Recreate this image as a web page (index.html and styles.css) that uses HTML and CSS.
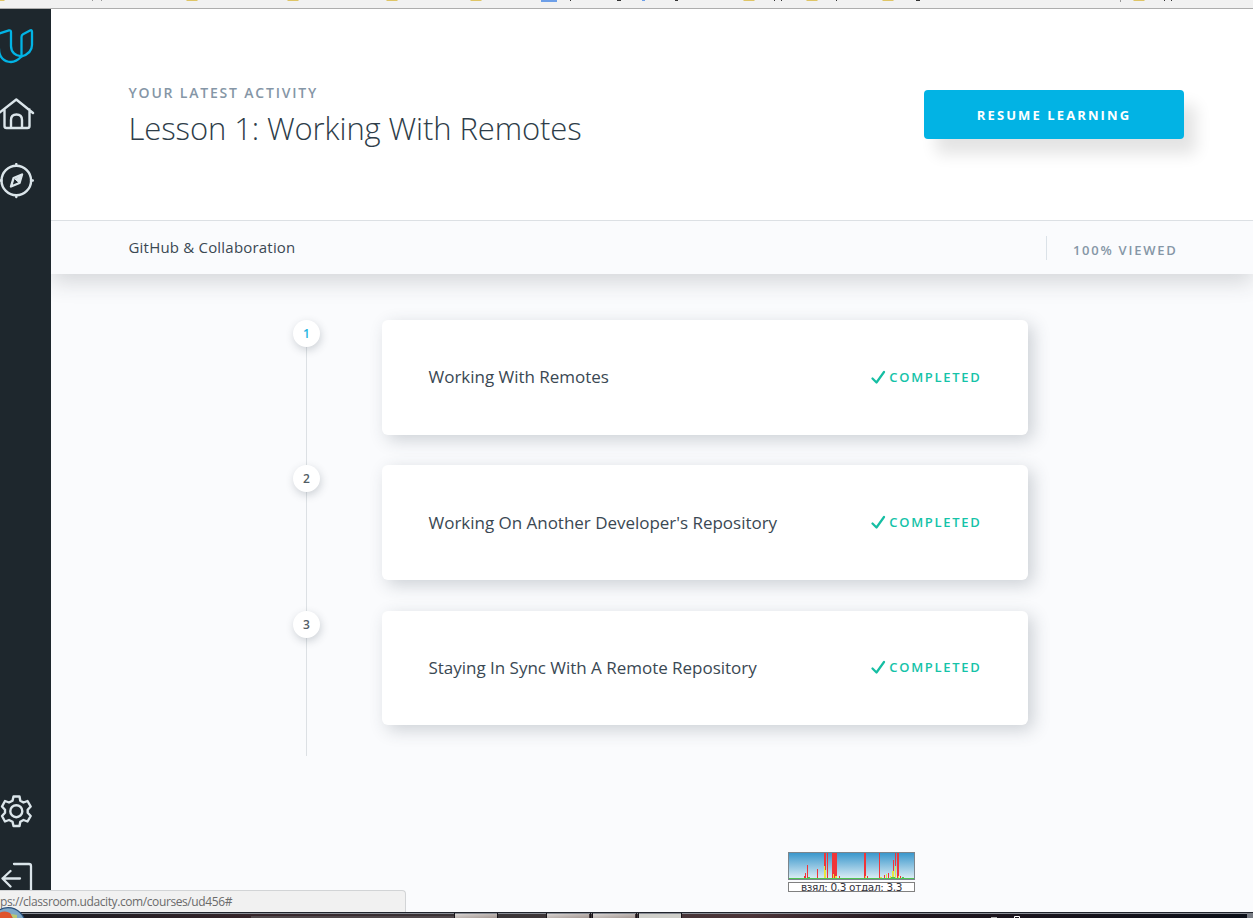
FILE: index.html
```html
<!DOCTYPE html>
<html lang="en">
<head>
<meta charset="utf-8">
<title>GitHub &amp; Collaboration</title>
<link rel="stylesheet" href="styles.css">
</head>
<body>
<div class="screen">
  <div class="bookmarks">
    <svg width="1253" height="3" viewBox="0 0 1253 3">
      <path fill="#dfc566" d="M0 0h5l-1 1h-4zM186 0h12l-1 1h-10zM287 0h12l-1 1h-10zM386 0h12l-1 1h-10zM470 0h12l-1 1h-10zM743 0h12l-1 1h-10zM806 0h12l-1 1h-10zM882 0h12l-1 1h-10zM1133 0h12l-1 1h-10z"/>
      <path fill="#6d9fe8" d="M541 0h16v2h-16zM642 0h3v1h-3z"/>
      <path fill="#999" d="M92 0h1v1h-1zM101 0h1v1h-1zM1120 0h1v2h-1z"/>
      <path fill="#333" d="M570 0h1v1h-1zM617 0h4v1h-4zM675 0h3v1h-3zM774 0h1v1h-1zM781 0h1v1h-1zM916 0h4v1h-4zM836 0h1v1h-1zM1164 0h1v1h-1zM1171 0h1v1h-1z"/>
    </svg>
  </div>
  <div class="app">
    <nav class="sidebar">
      <svg class="logo" width="35" height="36" viewBox="0 0 35 36" fill="none" stroke="#02b3e4" stroke-width="2.3" stroke-linejoin="round" stroke-linecap="round">
        <path d="M-1 4.500L9 1.400Q11 1 11 3V17C11 23 15.500 27.500 21.500 27M-1 20C-1 28 4 33 11 33C15 33 18 31 21.500 27.500"/>
        <path d="M21.500 27.500V8Q21.500 6 23 5.200L30.500 1.300Q32 .8 32 3V16C32 22 28 25.500 21.500 27.500Z"/>
      </svg>
      <svg class="home" width="35" height="34" viewBox="0 0 35 34" fill="none" stroke="#dbe5ea" stroke-width="2.400" stroke-linejoin="round" stroke-linecap="round">
        <path d="M-1 16L16.300 2.500L33 16M4.500 12.500V29Q4.500 31 6.500 31H27.500Q29.500 31 29.500 29V12.500M11 31V23Q11 17.500 16.500 17.500T22 23V31"/>
      </svg>
      <svg class="compass" width="36" height="36" viewBox="0 0 36 36" fill="none" stroke="#dbe5ea" stroke-width="2.400" stroke-linejoin="round" stroke-linecap="round">
        <circle cx="16.300" cy="17.500" r="14.800"/>
        <path d="M16.300 1V2.500M16.300 32.500V34M31 17.500h1.800M-1 17.500h2.500M22 11.500L19.500 20L11 23.500L13.600 15Z"/>
        <path d="M22 11.500L19.500 20L17.500 18.500L15 16Z" fill="#dbe5ea" stroke-width="1"/>
      </svg>
      <svg class="gear" width="34" height="34" viewBox="0 0 34 34" fill="none" stroke="#dbe5ea" stroke-width="2.400" stroke-linejoin="round">
        <path d="M13.500 2.500H19.500L20.300 6.700L23.500 8.500L27.500 7L30.700 12.500L27.700 15.800V18.800L30.700 22L27.500 27.500L23.500 26L20.300 27.800L19.500 32H13.500L12.500 27.800L9 26L5 27.500L2 22L5 18.800V15.800L2 12.500L5 7L9 8.500L12.500 6.700Z"/>
        <circle cx="16.300" cy="17.200" r="6"/>
      </svg>
      <svg class="exit" width="35" height="29" viewBox="0 0 35 29" fill="none" stroke="#dbe5ea" stroke-width="2.300" stroke-linejoin="round" stroke-linecap="round">
        <path d="M14 2H29Q31 2 31 4V30M20 16.500H2.500M10.500 9L2.500 16.500L10.500 24.500"/>
      </svg>
    </nav>
    <main class="main">
      <header class="hero">
        <div class="hero-text">
          <div class="eyebrow">YOUR LATEST ACTIVITY</div>
          <h1 class="title">Lesson 1: Working With Remotes</h1>
        </div>
        <button class="resume">RESUME LEARNING</button>
      </header>
      <div class="subbar">
        <div class="course">GitHub &amp; Collaboration</div>
        <div class="viewed">100% VIEWED</div>
      </div>
      <section class="lessons">
        <div class="row">
          <div class="step"><span class="num num-active">1</span></div>
          <article class="card"><span class="name">Working With Remotes</span><span class="done"><svg class="check" width="15" height="15" viewBox="0 0 15 15"><path d="M1.500 8.500L5.500 12.500L13 2"/></svg>COMPLETED</span></article>
        </div>
        <div class="row">
          <div class="step"><span class="num">2</span></div>
          <article class="card"><span class="name">Working On Another Developer's Repository</span><span class="done"><svg class="check" width="15" height="15" viewBox="0 0 15 15"><path d="M1.500 8.500L5.500 12.500L13 2"/></svg>COMPLETED</span></article>
        </div>
        <div class="row">
          <div class="step"><span class="num">3</span></div>
          <article class="card"><span class="name">Staying In Sync With A Remote Repository</span><span class="done"><svg class="check" width="15" height="15" viewBox="0 0 15 15"><path d="M1.500 8.500L5.500 12.500L13 2"/></svg>COMPLETED</span></article>
        </div>
      </section>
    </main>
  </div>
  <div class="taskbar">
    <svg width="1253" height="6" viewBox="0 0 1253 6">
      <defs>
        <linearGradient id="task"><stop offset="0" stop-color="#171a20"/><stop offset=".2" stop-color="#35252a"/><stop offset=".4" stop-color="#3a3638"/><stop offset=".6" stop-color="#4b3438"/><stop offset=".72" stop-color="#20171f"/><stop offset="1" stop-color="#0b0f18"/></linearGradient>
        <linearGradient id="tab" x2="1" y2="1"><stop offset="0" stop-color="#d8d4d2"/><stop offset="1" stop-color="#a39792"/></linearGradient>
      </defs>
      <path fill="url(#task)" d="M0 0h1253v6H0z"/>
      <path fill="#20242c" d="M0 0h1253v1H0z"/>
      <path fill="#888c94" d="M0 1h1253v1H0z"/>
      <path fill="#50484b" d="M251 4h204v2H251z"/>
      <path fill="url(#tab)" d="M455 2h42v4h-42z"/>
      <path fill="url(#tab)" d="M547 2h42v4h-42z"/>
      <path fill="url(#tab)" d="M593 2h42v4h-42z"/>
      <path fill="#cfcfca" d="M639 2h42v4h-42z"/>
      <path fill="none" stroke="#17151a" d="M454.500 1v5M497.500 1v5M546.500 1v5M590.500 1v5M592.500 1v5M636.500 1v5M638.500 1v5M681.500 1v5"/>
      <path fill="#aaa" d="M991 5h6v1h-6z"/>
      <path fill="none" stroke="#fff" d="M1014.500 6V4.500h5V6"/>
      <path fill="#777b83" d="M1247 1h6v5h-6z"/>
    </svg>
  </div>
  <div class="status">ps://classroom.udacity.com/courses/ud456#</div>
  <svg class="orb" width="26" height="11" viewBox="0 0 26 11">
    <circle cx="8" cy="18" r="17.300" fill="#7da8c8" stroke="#294e79" stroke-width="1.200"/>
    <path d="M-1 6Q5 3 10 6L13 11H-1Z" fill="#df542d"/><path d="M11 7L17 8L17 11H13Z" fill="#b9c873"/>
  </svg>
  <div class="traffic">
    <svg class="graph" width="127" height="28" viewBox="0 0 127 28" shape-rendering="crispEdges">
      <defs><linearGradient id="sky" x2="0" y2="1"><stop offset="0" stop-color="#3494cb"/><stop offset="1" stop-color="#e6f2f7"/></linearGradient></defs>
      <path fill="url(#sky)" d="M0 0h127v28H0z"/>
      <path fill="#f03538" d="M16 24h1v3h-1zM17 21h1v6h-1zM18.500 13h1.500v14h-1.500zM29 17h1.300v10h-1.300zM36 1h2v26h-2zM38.700 1h1.300v26h-1.300zM44 1h5v26h-5zM51 24h1v3h-1zM76 1h2v26h-2zM79 24h1v3h-1zM91 1h1.400v26h-1.400zM96 23h1v4h-1zM100 21h1v6h-1zM105 8h1.400v19h-1.400zM107 1h1.400v26h-1.400zM109 1h2v26h-2zM112 24h1v3h-1z"/>
      <path fill="#e8e640" d="M36 14h1v13h-1zM37 18h1v9h-1zM45 22h1v5h-1zM47 24h2v3h-2zM77 24h1v3h-1zM92 25h2v2h-2zM98 22h1v5h-1zM102 24h1v3h-1zM104 19h2v8h-2zM107 14h1v13h-1zM110 24h1v3h-1z"/>
      <path fill="#4dc353" d="M1 26h125v1H1zM20 25h2v1h-2zM103 25h4v1h-4zM114 25h2v1h-2z"/>
      <path fill="none" stroke="#7b858c" d="M.5.500h126v27H.5z"/>
    </svg>
    <div class="rates">взял: 0,3 отдал: 3,3</div>
  </div>
</div>
</body>
</html>
```
FILE: styles.css
```css
body { margin: 0; font-family: "Open Sans", "Noto Sans", sans-serif; }
.screen { position: relative; width: 1253px; height: 918px; overflow: hidden; display: flex; flex-direction: column; }
.bookmarks { height: 8px; background: #f1f1f1; border-bottom: 1px solid #adadad; }
.bookmarks svg, .taskbar svg, .traffic svg, .orb { display: block; }
.app { height: 903px; display: flex; }
.sidebar { width: 51px; background: #1e272d; display: flex; flex-direction: column; align-items: flex-start; }
.logo { margin-top: 20px; }
.home { margin-top: 32px; }
.compass { margin-top: 32px; }
.gear { margin-top: 595px; }
.exit { margin-top: 34px; }
.main { flex: 1; background: #fafbfd; display: flex; flex-direction: column; overflow: hidden; }
.hero { position: relative; z-index: 1; height: 211px; background: #fff; border-bottom: 1px solid #dce0e4; display: flex; justify-content: space-between; align-items: flex-start; padding: 0 69px 0 77.5px; }
.hero-text { padding-top: 73px; white-space: nowrap; }
.eyebrow { font-size: 14px; line-height: 22px; font-weight: 600; letter-spacing: 1.8px; color: #8596a6; }
.title { margin: 0; font-size: 31px; line-height: 49px; font-weight: 300; letter-spacing: -.1px; color: #2e3d49; }
.resume { margin-top: 81px; width: 260px; height: 49px; padding: 1px 0 0; border: 0; border-radius: 4px; background: #02b3e4; color: #fff; font: 700 13px/48px "Open Sans", sans-serif; letter-spacing: 2.1px; box-shadow: 12px 15px 16px rgba(0,0,0,.11); }
.subbar { position: relative; height: 53px; background: #fafbfd; box-shadow: 0 8px 22px rgba(46,50,55,.18); display: flex; justify-content: space-between; padding: 0 76px 0 77.5px; }
.course { font-size: 15px; line-height: 53px; letter-spacing: .2px; color: #3a4853; }
.viewed { height: 24px; margin-top: 15px; padding-left: 26px; border-left: 1px solid #dbe2e8; font-size: 13px; line-height: 29px; font-weight: 600; letter-spacing: 1.75px; margin-right: -.5px; color: #8596a6; }
.lessons { padding: 46px 0 0 241px; }
.row { display: flex; height: 145.300px; }
.step { width: 90px; background: linear-gradient(#dce0e4, #dce0e4) 14px 0 / 1px 100% no-repeat; }
.num { display: block; width: 27px; height: 27px; margin-left: 1px; border-radius: 50%; background: #fff; box-shadow: 1px 3px 9px rgba(46,61,73,.22); font-size: 12px; line-height: 27px; font-weight: 600; text-align: center; color: #525c65; }
.num-active { color: #22b4df; }
.card { width: 552px; height: 114.700px; padding: 0 47px; border-radius: 6px; background: #fff; box-shadow: 5px 5px 17px rgba(46,61,73,.22); display: flex; align-items: center; justify-content: space-between; white-space: nowrap; }
.row:last-child .card { height: 114px; }
.name { margin-left: -.5px; padding-bottom: 1px; font-size: 17px; letter-spacing: -.02px; color: #3a4853; }
.done { display: flex; align-items: center; gap: 3px; margin-right: -.5px; padding-bottom: 1px; font-size: 13px; font-weight: 600; letter-spacing: 1.7px; color: #15c3a8; }
.check { fill: none; stroke: #15bea3; stroke-width: 2.2; stroke-linecap: round; stroke-linejoin: round; position: relative; top: .5px; }
.taskbar { height: 6px; }
.status { position: absolute; left: 0; top: 890px; width: 405px; height: 21px; background: #f1f1f1; border: 1px solid #d2d4d6; border-left: 0; border-bottom: 0; border-radius: 0 4px 0 0; font: 12px/22px "Open Sans", sans-serif; letter-spacing: -.4px; color: #6b6b6b; white-space: nowrap; }
.orb { position: absolute; left: 0; top: 907px; }
.traffic { position: absolute; left: 788px; top: 852px; width: 127px; height: 40px; }
.rates { margin-top: 2px; box-sizing: border-box; height: 10px; border: 1px solid #808080; background: #fff; overflow: hidden; text-align: center; font: 10.5px/9px "DejaVu Sans", sans-serif; letter-spacing: -.35px; color: #33333d; white-space: nowrap; }
```
